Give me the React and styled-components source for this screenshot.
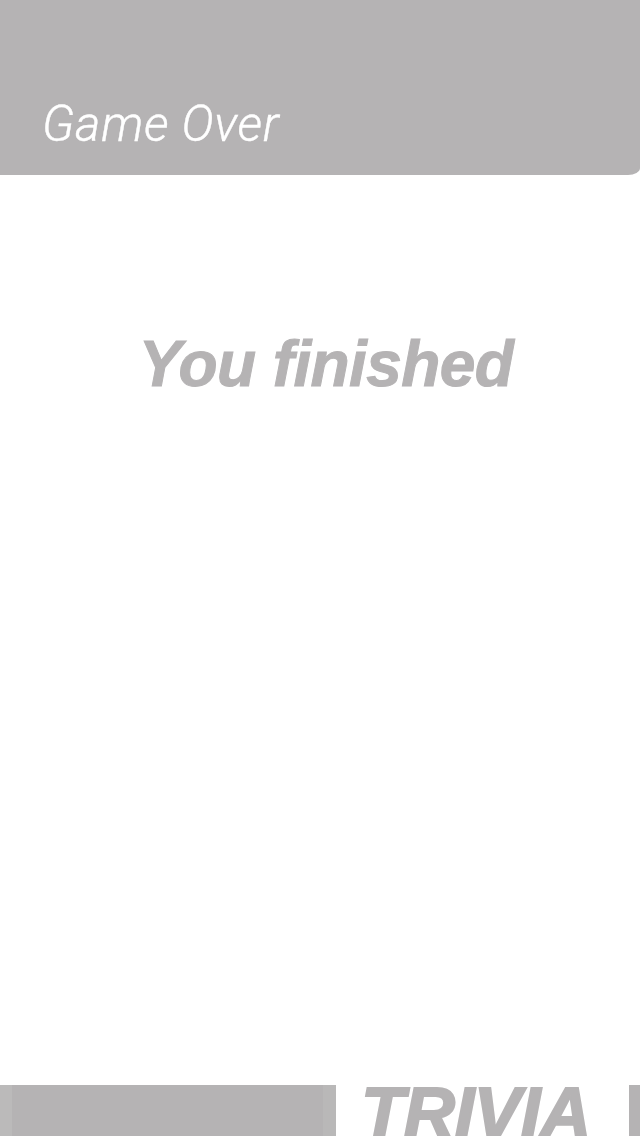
import React from 'react';
import styled, { createGlobalStyle } from 'styled-components';

const GlobalStyle = createGlobalStyle`
  html, body {
    margin: 0;
    padding: 0;
    background: #ffffff;
  }
  body {
    font-family: "Liberation Sans", Arial, sans-serif;
  }
`;

const gray = '#b5b3b4';

const Screen = styled.div`
  display: flex;
  flex-direction: column;
  width: 640px;
  height: 1136px;
  overflow: hidden;
  background: #ffffff;
`;

const Header = styled.header`
  display: flex;
  align-items: flex-end;
  height: 175px;
  box-sizing: border-box;
  padding: 0 0 26px 42px;
  background: ${gray};
  border-bottom-right-radius: 12px 7px;
`;

const Title = styled.h1`
  margin: 0;
  font-family: Roboto, "Liberation Sans", sans-serif;
  font-weight: 300;
  font-style: italic;
  font-size: 49px;
  line-height: 1;
  color: #ffffff;
  letter-spacing: 0.6px;
  -webkit-text-stroke: 0.4px #ffffff;
`;

const Main = styled.main`
  flex: 1;
  display: flex;
  justify-content: center;
  padding-top: 157px;
`;

const Message = styled.h2`
  margin: 0;
  font-family: "Liberation Sans", Arial, sans-serif;
  font-weight: 700;
  font-style: italic;
  font-size: 64px;
  line-height: 1;
  letter-spacing: -0.6px;
  color: ${gray};
  -webkit-text-stroke: 1px ${gray};
  padding-left: 12px;
`;

const Footer = styled.footer`
  display: flex;
  align-items: flex-start;
  height: 51px;
  overflow: hidden;
`;

const Bar = styled.div`
  width: ${(p) => p.$width}px;
  height: 100%;
  flex-shrink: 0;
  background: ${(p) =>
    p.$edges
      ? `linear-gradient(90deg, #bbbaba 0, #bbbaba 12px, ${gray} 12px, ${gray} calc(100% - 13px), #b9b8b8 calc(100% - 13px))`
      : gray};
`;

const Logo = styled.div`
  flex: 1;
  margin: -8px 0 0 25px;
  font-family: "Liberation Sans", Arial, sans-serif;
  font-weight: 700;
  font-style: italic;
  font-size: 71px;
  line-height: 71px;
  letter-spacing: -0.5px;
  color: ${gray};
  -webkit-text-stroke: 2px ${gray};
  white-space: nowrap;
`;

export default function App() {
  return (
    <>
      <GlobalStyle />
      <Screen>
        <Header>
          <Title>Game Over</Title>
        </Header>
        <Main>
          <Message>You finished</Message>
        </Main>
        <Footer>
          <Bar $width={336} $edges />
          <Logo>TRIVIA</Logo>
          <Bar $width={11} />
        </Footer>
      </Screen>
    </>
  );
}
